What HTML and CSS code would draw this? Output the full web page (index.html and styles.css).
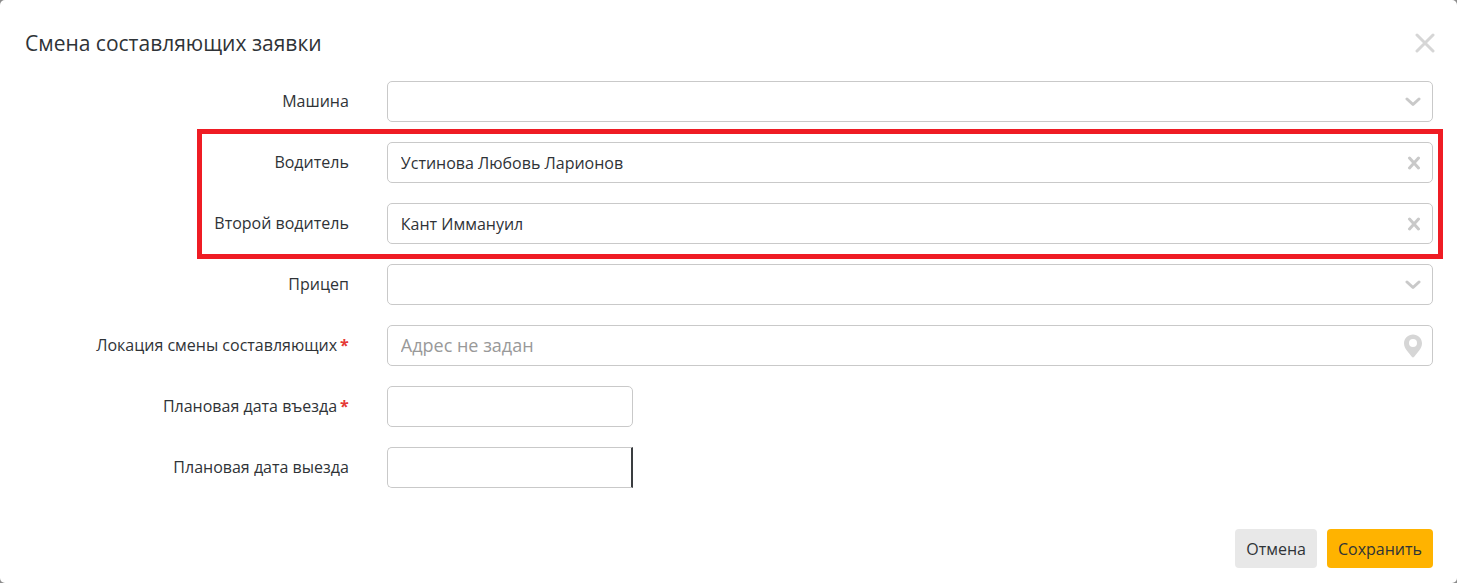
FILE: index.html
```html
<!DOCTYPE html>
<html lang="ru">
<head>
    <meta charset="UTF-8">
    <meta name="viewport" content="width=device-width, initial-scale=1.0">
    <title>Смена составляющих заявки</title>
    <link rel="stylesheet" href="styles.css">
</head>
<body>
    <form class="modal">

        <div class="modal-header">
            <h1 class="modal-title">Смена составляющих заявки</h1>
            <button type="button" class="icon-button" aria-label="Закрыть">
                <svg width="20" height="20" viewBox="0 0 20 20"><path class="cross" d="M2 2 L18 18 M18 2 L2 18"/></svg>
            </button>
        </div>

        <div class="fields">
            <div class="row">
                <label class="label" for="car">Машина</label>
                <div class="control">
                    <select class="input" id="car"><option></option></select>
                    <svg class="chevron" width="16" height="10" viewBox="0 0 16 10"><path class="stroke" d="M2 2 L8 7.5 L14 2"/></svg>
                </div>
            </div>

            <!-- drivers, framed in red -->
            <div class="drivers">
                <div class="row">
                    <label class="label" for="driver">Водитель</label>
                    <div class="control">
                        <input class="input" id="driver" type="text" value="Устинова Любовь Ларионов">
                        <button type="button" class="icon-button clear" aria-label="Очистить">
                            <svg width="14" height="14" viewBox="0 0 14 14"><path class="stroke" d="M2.5 2 L11.5 12 M11.5 2 L2.5 12"/></svg>
                        </button>
                    </div>
                </div>
                <div class="row">
                    <label class="label" for="driver2">Второй водитель</label>
                    <div class="control">
                        <input class="input" id="driver2" type="text" value="Кант Иммануил">
                        <button type="button" class="icon-button clear" aria-label="Очистить">
                            <svg width="14" height="14" viewBox="0 0 14 14"><path class="stroke" d="M2.5 2 L11.5 12 M11.5 2 L2.5 12"/></svg>
                        </button>
                    </div>
                </div>
            </div>

            <div class="row">
                <label class="label" for="trailer">Прицеп</label>
                <div class="control">
                    <select class="input" id="trailer"><option></option></select>
                    <svg class="chevron" width="16" height="10" viewBox="0 0 16 10"><path class="stroke" d="M2 2 L8 7.5 L14 2"/></svg>
                </div>
            </div>

            <div class="row">
                <label class="label" for="location">Локация смены составляющих<span class="required">*</span></label>
                <div class="control">
                    <input class="input" id="location" type="text" placeholder="Адрес не задан">
                    <button type="button" class="icon-button pin" aria-label="Выбрать на карте">
                        <svg width="18" height="24" viewBox="0 0 18 24"><path fill="#d6d6d6" fill-rule="evenodd" d="M9 0.5 C4.2 0.5 0 4.2 0 9.2 C0 12 1.2 14.2 3 16.8 L7.8 22.8 Q9 24 10.2 22.8 L15 16.8 C16.8 14.2 18 12 18 9.2 C18 4.2 13.8 0.5 9 0.5 Z M9 5 A4 4 0 1 1 9 13 A4 4 0 1 1 9 5 Z"/></svg>
                    </button>
                </div>
            </div>

            <div class="row">
                <label class="label" for="date-in">Плановая дата въезда<span class="required">*</span></label>
                <input class="input date" id="date-in" type="text">
            </div>

            <div class="row">
                <label class="label" for="date-out">Плановая дата выезда</label>
                <input class="input date date-out" id="date-out" type="text">
            </div>
        </div>

        <div class="modal-footer">
            <button type="button" class="button">Отмена</button>
            <button type="submit" class="button primary">Сохранить</button>
        </div>

    </form>
</body>
</html>
```
FILE: styles.css
```css
*{
    box-sizing: border-box;
    margin: 0;
    padding: 0;
}

body{
    background-color: #8c8c8c;
    font-family: "Open Sans", "Noto Sans", sans-serif;
    font-size: 16px;
    color: #2f3337;
}

.modal{
    min-height: 100vh;
    background-color: #fff;
    border-radius: 5px;
    padding: 24px 24px 15px 25px;
}

.modal-header{
    display: flex;
    align-items: center;
    justify-content: space-between;
    height: 38px;
}

.modal-title{
    font-size: 21px;
    font-weight: 400;
}

.icon-button{
    display: flex;
    border: none;
    background: none;
    cursor: pointer;
}

.modal-header .icon-button{
    margin-right: -2px;
}

.cross{
    fill: none;
    stroke: #d6d6d6;
    stroke-width: 3;
    stroke-linecap: round;
}

.stroke{
    fill: none;
    stroke: #c9c9c9;
    stroke-width: 3;
    stroke-linecap: round;
    stroke-linejoin: round;
}

.fields,
.drivers{
    display: flex;
    flex-direction: column;
    gap: 20px;
}

.fields{
    margin-top: 19px;
}

.row{
    display: grid;
    grid-template-columns: 23% 1fr;
    column-gap: 38px;
    align-items: center;
}

.label{
    padding-bottom: 2px;
    text-align: right;
    line-height: 24px;
}

.required{
    margin-left: 3px;
    color: #e53935;
    font-weight: 700;
}

.control{
    position: relative;
}

.input{
    display: block;
    width: 100%;
    height: 41px;
    border: 1px solid #c9c9c9;
    border-radius: 5px;
    background-color: #fff;
    padding: 0 40px 0 13px;
    font: inherit;
    color: inherit;
    appearance: none;
    outline: none;
}

.input::placeholder{
    font-size: 18px;
    color: #999;
    opacity: 1;
}

.date{
    width: 246px;
    padding-right: 13px;
}

.date-out{
    border-right: 2px solid #3a3d40;
    border-radius: 5px 0 0 5px;
}

/* icons over the right end of a field */
.chevron,
.clear,
.pin{
    position: absolute;
    top: 50%;
    right: 12px;
    transform: translateY(-50%);
}

.chevron{
    pointer-events: none;
}

.pin{
    right: 11px;
}

.drivers{
    position: relative;
}

.drivers::before{
    content: "";
    position: absolute;
    top: -13px;
    right: -10px;
    bottom: -15px;
    left: 172px;
    border: 5px solid #ef1c24;
    pointer-events: none;
}

.modal-footer{
    display: flex;
    justify-content: flex-end;
    gap: 10px;
    margin-top: 41px;
}

.button{
    height: 39px;
    padding: 0 11px;
    border: none;
    border-radius: 4px;
    background-color: #e8e8e8;
    font: inherit;
    color: inherit;
    cursor: pointer;
}

.primary{
    background-color: #ffb300;
}

@media screen and (max-width: 600px) {
    .row{
        grid-template-columns: 1fr;
        row-gap: 6px;
    }
    .label{
        text-align: left;
    }
    .drivers::before{
        left: -10px;
    }
}
```
